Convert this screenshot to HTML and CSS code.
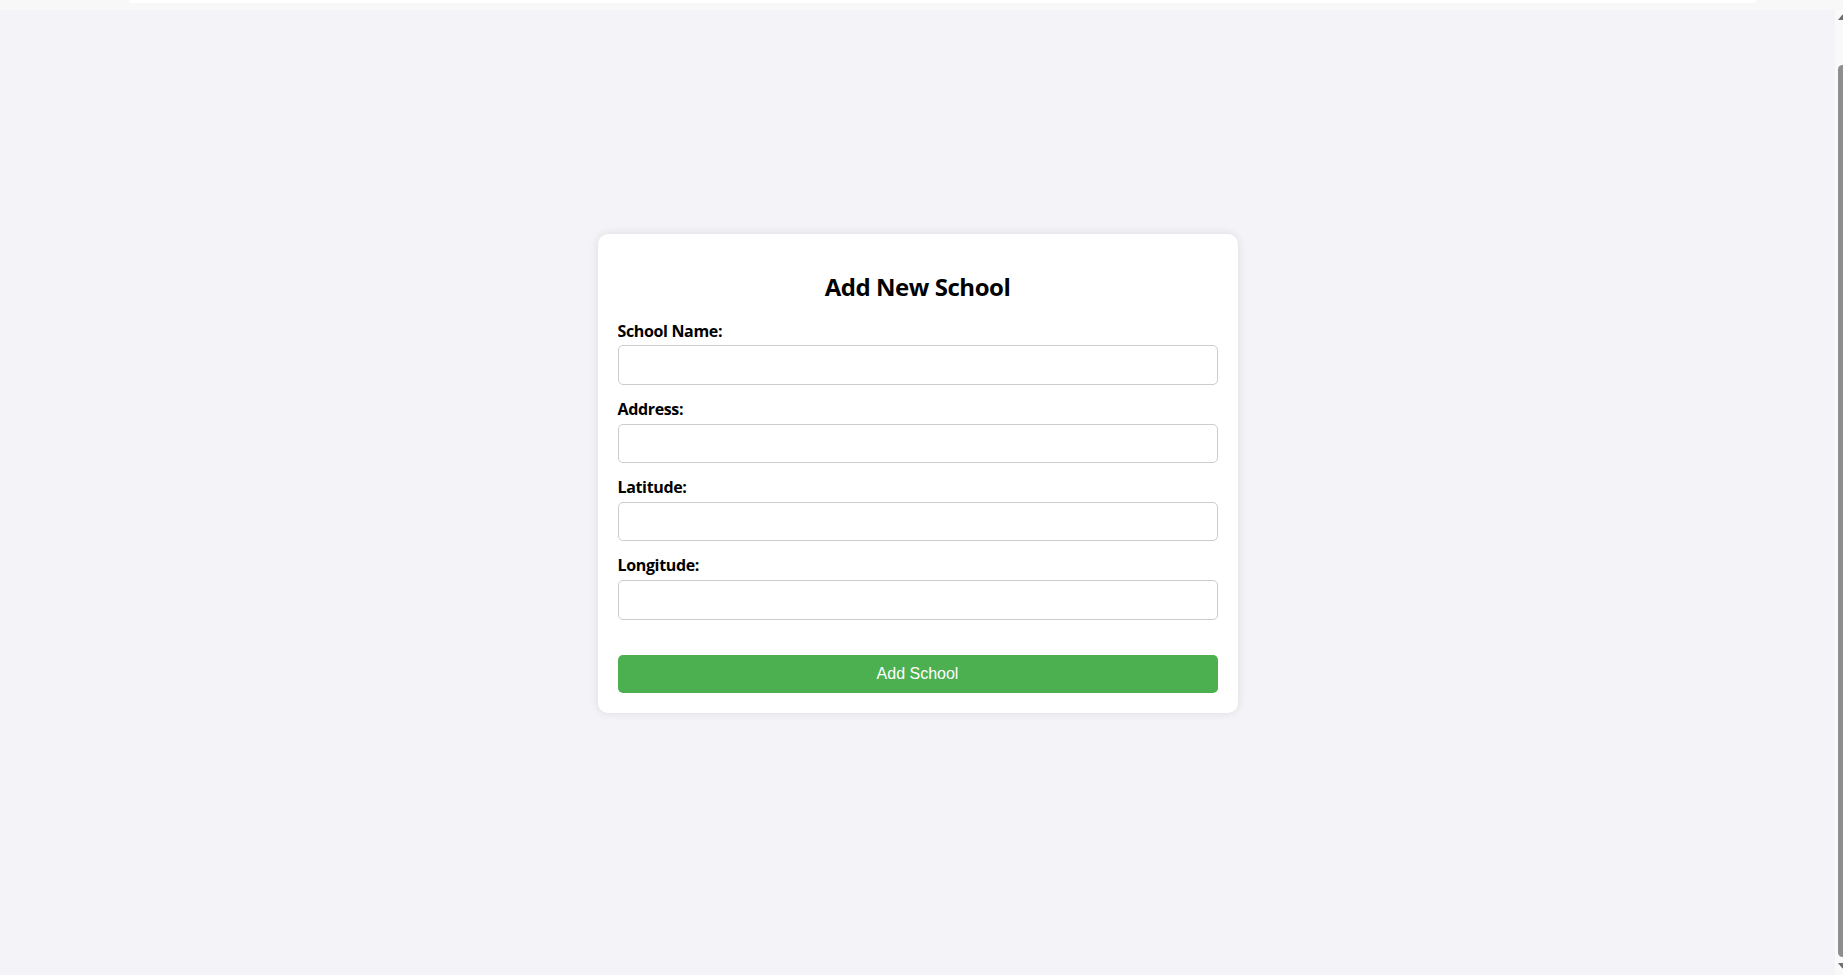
FILE: index.html
```html
<!DOCTYPE html>
<html lang="en">
<head>
<meta charset="UTF-8">
<title>Add New School</title>
<link rel="stylesheet" href="styles.css">
</head>
<body>
<div class="browser-strip"><div class="strip-tab"></div></div>
<div class="viewport">
  <main class="page">
    <div class="card">
      <h2 class="card-title">Add New School</h2>
      <form class="school-form">
        <label class="field-label" for="name">School Name:</label>
        <input class="field-input" id="name" type="text">
        <label class="field-label" for="address">Address:</label>
        <input class="field-input" id="address" type="text">
        <label class="field-label" for="lat">Latitude:</label>
        <input class="field-input" id="lat" type="text">
        <label class="field-label" for="lng">Longitude:</label>
        <input class="field-input" id="lng" type="text">
        <button class="submit-btn" type="button">Add School</button>
      </form>
    </div>
  </main>
  <div class="scrollbar">
    <div class="scroll-inner">
      <svg class="scroll-arrow up" width="15" height="6" viewBox="0 0 15 6"><polygon points="3,6 7.5,0.5 12,6" fill="#6f6f6f"/></svg>
      <div class="scroll-thumb"></div>
      <svg class="scroll-arrow down" width="15" height="6" viewBox="0 0 15 6"><polygon points="3,0 12,0 7.5,5.5" fill="#6f6f6f"/></svg>
    </div>
  </div>
</div>
</body>
</html>
```

FILE: styles.css
```css
html, body {
  margin: 0;
  padding: 0;
  height: 975px;
  overflow: hidden;
}

body {
  font-family: "Open Sans", "Noto Sans", sans-serif;
  background: #f4f4f8;
}

.browser-strip {
  height: 10px;
  background: #f8f8f8;
  padding: 0 87px 0 129px;
}

.strip-tab {
  height: 3px;
  background: #ffffff;
  border-radius: 0 0 4px 4px;
}

.viewport {
  display: flex;
  height: 965px;
}

.page {
  flex: 1;
  background: #f4f4f8;
  display: flex;
  justify-content: center;
  align-items: flex-start;
  padding-top: 224px;
}

.card {
  width: 600px;
  padding: 20px;
  background: #ffffff;
  border-radius: 10px;
  box-shadow: 0 0 10px rgba(0, 0, 0, 0.1);
}

.card-title {
  margin: 18.5px 0 22px;
  font-size: 24px;
  line-height: 27px;
  font-weight: 700;
  text-align: center;
  color: #000;
  letter-spacing: -0.45px;
}

.school-form {
  display: flex;
  flex-direction: column;
}

.field-label {
  display: block;
  font-size: 16px;
  line-height: 18.4px;
  font-weight: 700;
  color: #000;
  margin-bottom: 5.5px;
  letter-spacing: -0.35px;
}

.field-input {
  box-sizing: border-box;
  width: 100%;
  height: 39.4px;
  margin: 0 0 15px;
  padding: 10px;
  border: 1px solid #cccccc;
  border-radius: 5px;
  background: #fff;
  font-size: 16px;
}

.submit-btn {
  margin-top: 20.6px;
  height: 37.4px;
  padding: 0;
  border: none;
  border-radius: 5px;
  background: #4caf50;
  color: #ffffff;
  font-family: "Liberation Sans", Arial, sans-serif;
  font-size: 16px;
  cursor: pointer;
}

.scrollbar {
  width: 8px;
  overflow: hidden;
  background: #f9f9f9;
}

.scroll-inner {
  width: 15px;
  display: flex;
  flex-direction: column;
  align-items: center;
}

.scroll-arrow {
  display: block;
  flex: none;
}

.scroll-arrow.up {
  margin-top: 4px;
}

.scroll-thumb {
  margin-top: 45px;
  width: 9.6px;
  height: 892px;
  background: #8e8e8e;
  border-radius: 5px;
}

.scroll-arrow.down {
  margin-top: 6px;
}
```
